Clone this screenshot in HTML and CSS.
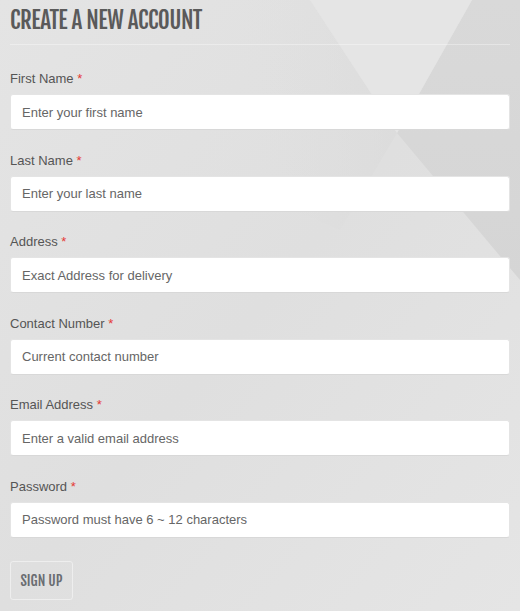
FILE: index.html
```html
<!DOCTYPE html>
<html>
<head>
<meta charset="utf-8">
<title>Create a new account</title>
<link rel="stylesheet" href="styles.css">
</head>
<body>
<main class="page">
  <h1 class="title">Create a new account</h1>
  <form class="form">
    <div class="field">
      <label class="label">First Name <span class="req">*</span></label>
      <input class="input" type="text" placeholder="Enter your first name">
    </div>
    <div class="field">
      <label class="label">Last Name <span class="req">*</span></label>
      <input class="input" type="text" placeholder="Enter your last name">
    </div>
    <div class="field">
      <label class="label">Address <span class="req">*</span></label>
      <input class="input" type="text" placeholder="Exact Address for delivery">
    </div>
    <div class="field">
      <label class="label">Contact Number <span class="req">*</span></label>
      <input class="input" type="text" placeholder="Current contact number">
    </div>
    <div class="field">
      <label class="label">Email Address <span class="req">*</span></label>
      <input class="input" type="text" placeholder="Enter a valid email address">
    </div>
    <div class="field">
      <label class="label">Password <span class="req">*</span></label>
      <input class="input" type="password" placeholder="Password must have 6 ~ 12 characters">
    </div>
    <button class="btn" type="button">Sign up</button>
  </form>
</main>
</body>
</html>
```
FILE: styles.css
```css
html, body {
  margin: 0;
  padding: 0;
}
body {
  width: 520px;
  min-height: 611px;
  font-family: "Liberation Sans", Arial, sans-serif;
  background-color: #e1e1e1;
  background-image: url("data:image/svg+xml,%3Csvg xmlns='http://www.w3.org/2000/svg' width='520' height='611'%3E%3Cdefs%3E%3ClinearGradient id='b' x1='0' y1='0' x2='1' y2='1'%3E%3Cstop offset='0' stop-color='%23e4e4e4'/%3E%3Cstop offset='0.5' stop-color='%23dfdfdf'/%3E%3Cstop offset='1' stop-color='%23e5e5e5'/%3E%3C/linearGradient%3E%3ClinearGradient id='l' x1='0' y1='0' x2='1' y2='0'%3E%3Cstop offset='0' stop-color='%23e3e3e3' stop-opacity='0'/%3E%3Cstop offset='1' stop-color='%23d9d9d9'/%3E%3C/linearGradient%3E%3ClinearGradient id='r' x1='0' y1='0' x2='0' y2='1'%3E%3Cstop offset='0' stop-color='%23d9d9d9'/%3E%3Cstop offset='1' stop-color='%23d5d5d5'/%3E%3C/linearGradient%3E%3C/defs%3E%3Crect width='520' height='611' fill='url(%23b)'/%3E%3Cpolygon points='200,0 310,0 397,133 340,230 200,170' fill='url(%23l)' opacity='0.5'/%3E%3Cpolygon points='472,0 520,0 520,280 397,133' fill='url(%23r)'/%3E%3Cpolygon points='310,0 472,0 397,133' fill='%23e5e5e5'/%3E%3C/svg%3E");
  background-repeat: no-repeat;
}
.page {
  padding: 0 10px 10px;
}
.title {
  margin: 0 0 24px;
  padding: 6px 0 9px;
  font-family: "Fjalla One", "Oswald", "Roboto Condensed", sans-serif;
  font-weight: normal;
  font-size: 23px;
  letter-spacing: -0.5px;
  line-height: 29px;
  text-transform: uppercase;
  color: #5a5a5a;
  border-bottom: 1px solid rgba(255, 255, 255, 0.35);
}
.form {
  display: flex;
  flex-direction: column;
}
.field {
  display: flex;
  flex-direction: column;
  margin-bottom: 20.6px;
}
.label {
  font-size: 13px;
  line-height: 20px;
  color: #555;
  margin-bottom: 5px;
}
.req {
  color: #e53935;
}
.input {
  box-sizing: border-box;
  width: 100%;
  height: 36px;
  margin: 0;
  padding: 0 11px;
  border: 1px solid #e4e4e4;
  border-bottom-color: #d8d8d8;
  border-radius: 3px;
  background: #fff;
  font-family: "Liberation Sans", Arial, sans-serif;
  font-size: 13px;
  color: #555;
  outline: none;
}
.input::placeholder {
  color: #666;
  opacity: 1;
}
.btn {
  align-self: flex-start;
  margin-top: 2px;
  box-sizing: border-box;
  width: 63px;
  height: 39px;
  padding: 0;
  border: 1px solid #eeeeee;
  border-radius: 3px;
  background: transparent;
  font-family: "Fjalla One", "Oswald", "Roboto Condensed", sans-serif;
  font-size: 14px;
  text-transform: uppercase;
  color: #6a6d72;
  cursor: pointer;
}
```
